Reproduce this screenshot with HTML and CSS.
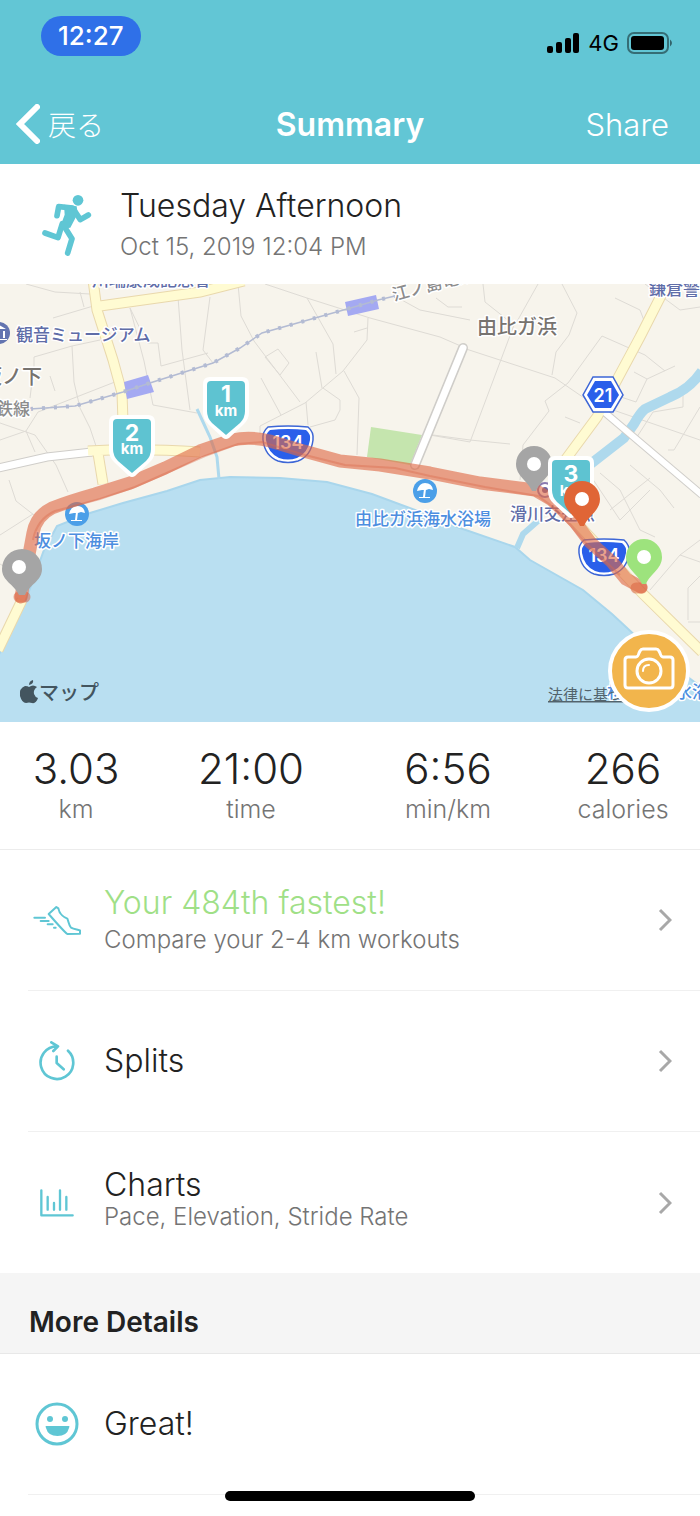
FILE: index.html
```html
<!DOCTYPE html>
<html lang="en">
<head>
<meta charset="utf-8">
<meta name="viewport" content="width=device-width, initial-scale=1">
<title>Summary</title>
<link rel="stylesheet" href="styles.css">
</head>
<body>
<div class="app">
  <header class="top">
    <div class="status">
      <span class="clock">12:27</span>
      <div class="signal">
        <svg width="33" height="20" viewBox="0 0 33 20" aria-hidden="true"><rect x="0" y="13" width="6" height="7" rx="2"/><rect x="9" y="9" width="6" height="11" rx="2"/><rect x="18" y="5" width="6" height="15" rx="2"/><rect x="26" y="0" width="6" height="20" rx="2"/></svg>
        <span>4G</span>
        <svg width="46" height="22" viewBox="0 0 46 22" aria-hidden="true"><rect x="1" y="1" width="40" height="20" rx="6" fill="none" stroke="#000" stroke-opacity=".45" stroke-width="2"/><rect x="4" y="4" width="33" height="14" rx="3"/><path d="M43 7.500q4 3.500 0 7z" fill-opacity=".5"/></svg>
      </div>
    </div>
    <nav class="nav">
      <button class="back" type="button">
        <svg width="24" height="40" viewBox="0 0 24 40" aria-hidden="true"><path d="M21 3 4 20l17 17" fill="none" stroke="#fff" stroke-width="6" stroke-linecap="round"/></svg>
        <span lang="ja">戻る</span>
      </button>
      <h1>Summary</h1>
      <button class="share" type="button">Share</button>
    </nav>
  </header>

  <section class="workout">
    <svg class="runner" width="53" height="65" viewBox="120 580 159 195" aria-hidden="true">
      <g fill="none" stroke="#5fc6d4" stroke-width="17" stroke-linecap="round" stroke-linejoin="round"><path d="M171 648 176 621 218 625 241 660 265 646"/><path d="M190 676 216 717 203 760"/><path d="M187 672 174 714 135 700"/></g>
      <path d="M192 615 230 620 233 642 211 684 178 688 194 645z" fill="#5fc6d4"/><circle cx="234" cy="602" r="16" fill="#5fc6d4"/>
    </svg>
    <div>
      <h2>Tuesday Afternoon</h2>
      <p>Oct 15, 2019 12:04 PM</p>
    </div>
  </section>

  <section class="map" aria-label="Route map">
    <svg class="map-art" viewBox="0 284 700 438">
      <defs>
        <g id="km"><path d="M-16 0H16Q23 0 23 7V35Q23 43 17 48L3 61Q0 63-3 61L-17 48Q-23 43-23 35V7Q-23 0-16 0z" fill="#fff"/><path d="M-15 4H15Q19 4 19 8V34Q19 41 14 46L0 58-14 46Q-19 41-19 34V8Q-19 4-15 4z" fill="#5ec3d1"/></g>
        <g id="pin"><path d="M0-18A18 18 0 0 1 18 0C18 12 6 17 2 27H-2C-6 17-18 12-18 0A18 18 0 0 1 0-18z"/><circle r="7" fill="#fff"/></g>
        <g id="route134"><path d="M-20-17Q0-19 20-17 26-12 25-4 23 12 10 17 0 20-10 17-23 12-25-4-26-12-20-17z" fill="#fff" stroke="#3d66d6" stroke-width="1.500"/><path d="M-18-14Q0-16 18-14 23-10 22-4 20 9 9 14 0 17-9 14-20 9-22-4-23-10-18-14z" fill="#2a5fea"/><text y="5" class="shield">134</text></g>
        <g id="beach"><circle r="12" fill="#4b9fe8"/><path d="M-8 0Q-6-8 0-8 7-8 8-1L4-2 1-1-3-1zM-1-2H1L0 6H-2zM-6 6H5V7H-6z" fill="#fff"/></g>
      </defs>
      <rect y="284" width="700" height="438" fill="#f7f4ec"/>
      <path d="M-5 662 24 605 44 550 57 526 90 513 123 503 167 491 200 480 230 477 280 478 327 482 372 494 415 510 460 528 515 547 530 560 583 590 612 614 640 640 668 662 705 690V730H-5z" fill="#b9dff1" stroke="#a9d6ec" stroke-width="2"/>
      <g fill="none" stroke="#dedbd5" stroke-width="1">
        <path d="M26 284 55 292 90 294M80 292 84 307M53 318 100 304M34 366V357L72 346 100 340M34 366 30 398M72 346 74 382 80 408 90 428 96 446M50 376 55 391M0 440 26 431 38 412 120 380M26 431 35 452M130 308 144 361 153 405 197 413M178 297 182 350 190 410M130 308 147 343H158L161 366 208 353M210 297 203 350 213 363M0 423 35 435 56 465 68 492M9 480 16 501 34 515"/>
        <path d="M238 284 241 316 254 341 300 402M265 284 307 298 370 318 440 337 463 347M307 298 333 344 336 374M368 318 367 340 343 371 305 403 260 426 260 434M316 352 322 388M354 332 367 328M265 357 278 349 289 363 280 375 265 357M261 378 281 415M323 388 340 400 340 410 335 420 310 427M306 402 308 425M344 371 359 398 357 455M433 435 470 440 510 444M400 299 420 310 470 320M436 298 448 307 462 307"/>
        <path d="M483 284 485 302 514 325 470 442 430 435M562 284 577 313 569 335 556 352 552 375M538 284 515 325M460 347 555 378 590 402 700 440M615 298 640 310 645 323M602 336 568 383 545 401 549 411 523 445 520 480M602 336 645 355 665 371M645 284 680 310 700 307M634 372 647 379 636 402 621 397M647 379 675 366M683 395V407L653 412 635 440M700 407 674 450 668 450M600 473 620 490 640 530 655 537M592 478 620 520 650 490M630 465 660 490 674 508M700 540 680 555 650 590M680 555 700 562M700 576 688 588V620M688 622H700M565 417 580 423M0 535 33 514M0 564 10 570M610 510 650 478"/>
      </g>
      <path d="M371 427 422 435 410 465 367 457z" fill="#c5e5ae"/>
      <g fill="none" stroke="#aed9ed"><path d="M702 371Q690 389 670 397L645 409Q640 413 634 424L624 438 588 466" stroke-width="10"/><path d="M539 520 523 534 517 548" stroke-width="6"/><path d="M197 409 210 437 217 457 219 479" stroke-width="3"/></g>
      <g fill="none">
        <g stroke="#e9d8ac" stroke-width="11"><path d="M93 280 97 310 113 360 122 393 124 450M100 306 200 292 244 281M88 451Q140 448 200 452M97 447 103 484M669 280 640 337 597 417 563 463M560 505 642 593 702 652M22 600-2 650"/></g>
        <g stroke="#cfcdc9"><path d="M-2 468 47 457 92 452" stroke-width="9"/><path d="M603 411 702 495" stroke-width="8"/><path d="M463 348 415 465" stroke-width="10" stroke-linecap="round"/></g>
        <g stroke="#fff"><path d="M-2 468 47 457 92 452" stroke-width="7"/><path d="M603 411 702 495" stroke-width="6"/><path d="M463 348 415 465" stroke-width="7" stroke-linecap="round"/></g>
        <g stroke="#fffbd2" stroke-width="9"><path d="M93 280 97 310 113 360 122 393 124 450M100 306 200 292 244 281M88 451Q140 448 200 452M97 447 103 484M669 280 640 337 597 417 563 463M560 505 642 593 702 652M22 600-2 650"/></g>
      </g>
      <path d="M124 382 148 375 154 392 127 399zM345 302 376 295 379 309 348 316z" fill="#a4a9f2"/>
      <g fill="none" stroke="#b3bbd3"><path d="M30 409 75 406 123 392 153 382 213 363 240 348 262 333 347 309 378 300 395 296" stroke-width="1.500"/><path d="M30 409 75 406 123 392 153 382 213 363 240 348 262 333 347 309 378 300 395 296" stroke-width="4" stroke-dasharray="3 9"/></g>

      <g class="halo" lang="ja">
        <g class="place"><text x="92" y="286">川端康成記念會</text><text x="16" y="341">観音ミュージアム</text><text x="649" y="295">鎌倉警察署</text><text x="510" y="520">滑川交差点</text></g>
        <g class="blue"><text x="355" y="525">由比ガ浜海水浴場</text><text x="34" y="547">坂ノ下海岸</text><text x="607" y="698">材木座海水浴場</text></g>
        <g class="town"><text x="477" y="334">由比ガ浜</text><text x="-18" y="384">坂ノ下</text></g>
        <g class="line"><text x="-4" y="415">鉄線</text><text x="394" y="301" transform="rotate(-15 394 301)">江ノ島電鉄</text></g>
      </g>
      <circle cx="-1" cy="333" r="11" fill="#6374b0"/><path d="M-7 329-1 325 6 329zM-6 331H-4V338H-6zM-2 331H0V338H-2zM3 331H5V338H3zM-7 339H7V340H-7z" fill="#fff"/>
      <use href="#beach" x="425" y="491"/><use href="#beach" x="77" y="514"/>
      <use href="#route134" x="288" y="444"/><use href="#route134" x="604" y="557"/>
      <path d="M593 377H613L623 395 613 412H593L583 395z" fill="#fff" stroke="#3d66d6" stroke-width="1.500"/><path d="M595 381H611L619 395 611 408H595L587 395z" fill="#2a5fea"/><text x="603" y="402" class="shield">21</text>
      <circle cx="545" cy="490" r="7" fill="#fff" stroke="#8a7ab0" stroke-width="2"/><circle cx="545" cy="490" r="3" fill="#6b62a0"/>

      <path d="M21 597 27 565 33 533Q36 516 52 508 70 501 95 494L130 483 165 468 200 451 232 440Q250 436 270 441L300 450 340 461 380 465 430 473 480 483 535 490 552 500 575 522 590 542 612 562 626 579 641 587" fill="none" stroke="#de6946" stroke-opacity=".62" stroke-width="13" stroke-linejoin="round" stroke-linecap="round"/>
      <path d="M33 540Q37 519 55 511L100 499 135 487 205 456 238 444 262 442 305 455 345 465 395 468 430 476 485 487 538 496 556 509 585 542 620 575" fill="none" stroke="#d9694a" stroke-opacity=".4" stroke-width="2"/>
      <path d="M19 597H25M636 588H642" stroke="#d95e3c" stroke-opacity=".5" stroke-width="11" stroke-linecap="round"/>

      <g class="km"><use href="#km" x="226" y="377"/><text x="226" y="402" class="num">1</text><text x="226" y="416">km</text>
      <use href="#km" x="132" y="415"/><text x="132" y="441" class="num">2</text><text x="132" y="454">km</text></g>
      <use href="#pin" x="534" y="464" fill="#a5a5a5"/>
      <g class="km"><use href="#km" x="571" y="456"/><text x="571" y="482" class="num">3</text><text x="571" y="496">km</text></g>
      <use href="#pin" x="582" y="499" fill="#e06536"/>
      <use href="#pin" x="644" y="557" fill="#9de37d"/>
      <path d="M22 549A20 20 0 0 1 42 569C42 581 30 584 25 595H19C14 584 2 581 2 569A20 20 0 0 1 22 549z" fill="#a5a5a5"/><circle cx="19" cy="567" r="7" fill="#fff"/>

      <path d="M37 687Q33 690 34 694 35 697 38 698 36 704 32 703 29 702 26 703 22 703 20 696 19 688 25 686 28 686 29 687 33 684 37 687zM29 685Q29 681 33 680 34 684 29 685z" fill="#43555f"/>
      <text x="39" y="700" class="brand" lang="ja">マップ</text>
      <a href="#legal"><text x="548" y="700" class="legal" lang="ja">法律に基づく情報</text></a>
    </svg>
    <button class="camera" type="button" aria-label="Add photo">
      <svg width="52" height="44" viewBox="0 0 52 44" fill="none" stroke="#fff" stroke-width="3" stroke-linejoin="round" aria-hidden="true"><path d="M5 10H13Q15 10 16 6L17 4Q18 2 20 2H33Q35 2 36 4L37 6Q38 10 40 10H47Q50 10 50 13V38Q50 41 47 41H5Q2 41 2 38V13Q2 10 5 10z"/><circle cx="26" cy="24" r="12"/><path d="M20 24Q20 18 26 18" stroke-width="2" stroke-linecap="round"/></svg>
    </button>
  </section>

  <dl class="stats">
    <div><dd>3.03</dd><dt>km</dt></div>
    <div><dd>21:00</dd><dt>time</dt></div>
    <div><dd>6:56</dd><dt>min/km</dt></div>
    <div><dd>266</dd><dt>calories</dt></div>
  </dl>

  <main>
    <a class="row" href="#compare">
      <span class="icon"><svg width="49" height="33" viewBox="95 522 147 99" fill="none" stroke="#5fc6d4" stroke-width="6" stroke-linecap="round" stroke-linejoin="round" aria-hidden="true"><path d="M142 552 165 531 171 535C174 553 190 563 198 566 202 576 203 587 209 593 218 598 226 598 236 601V611L198 612Q190 607 142 552z"/><path d="M99 563H131M118 573H142M139 583H154M158 593H163"/></svg></span>
      <span class="text"><span class="title best">Your 484th fastest!</span><span class="sub">Compare your 2-4 km workouts</span></span>
      <svg class="chevron" width="14" height="24" viewBox="0 0 14 24" aria-hidden="true"><path d="M2 2 12 12 2 22"/></svg>
    </a>
    <a class="row" href="#splits">
      <span class="icon"><svg width="38" height="40" viewBox="113 68 114 120" fill="none" stroke="#5fc6d4" stroke-width="8" stroke-linecap="round" stroke-linejoin="round" aria-hidden="true"><path d="M203 97A49 49 0 1 1 170 84M153 72 173 84 159 98M169 115V134L190 153"/></svg></span>
      <span class="text"><span class="title">Splits</span></span>
      <svg class="chevron" width="14" height="24" viewBox="0 0 14 24" aria-hidden="true"><path d="M2 2 12 12 2 22"/></svg>
    </a>
    <a class="row tight" href="#charts">
      <span class="icon"><svg width="34" height="28" viewBox="124 511 102 84" fill="none" stroke="#5fc6d4" stroke-width="7" stroke-linecap="round" stroke-linejoin="round" aria-hidden="true"><path d="M128 515V590H222M147 535V573M166 553V573M184 515V573M203 535V573"/></svg></span>
      <span class="text"><span class="title">Charts</span><span class="sub">Pace, Elevation, Stride Rate</span></span>
      <svg class="chevron" width="14" height="24" viewBox="0 0 14 24" aria-hidden="true"><path d="M2 2 12 12 2 22"/></svg>
    </a>
    <h3 class="section">More Details</h3>
    <div class="row">
      <span class="icon"><svg width="44" height="44" viewBox="0 0 44 44" fill="#5fc6d4" aria-hidden="true"><circle cx="22" cy="22" r="20" fill="none" stroke="#5fc6d4" stroke-width="3"/><circle cx="15" cy="17" r="3"/><circle cx="30" cy="17" r="3"/><path d="M11 24H34Q35 24 34 26 32 34 22.500 34 13 34 11 26 10 24 11 24z"/></svg></span>
      <span class="text"><span class="title">Great!</span></span>
    </div>
  </main>
  <div class="home"></div>
</div>
</body>
</html>
```
FILE: styles.css
```css
* { box-sizing: border-box; }
body, h1, h2, h3, p, dl, dd { margin: 0; }
body {
  background: #fff;
  color: #222;
  font-family: Inter, "Noto Sans CJK JP", sans-serif;
  font-weight: 300;
}
button { border: 0; padding: 0; background: none; font: inherit; color: inherit; cursor: pointer; }
a { color: inherit; text-decoration: none; }
svg { flex: none; display: block; }
.app { position: relative; min-height: 100vh; padding-bottom: 20px; }

.top { background: #62c6d5; color: #fff; }
.status { display: flex; justify-content: space-between; align-items: flex-start; padding: 16px 27px 0 41px; height: 84px; }
.clock { padding: 0 17px; border-radius: 20px; background: #2f70e8; font-size: 26px; font-weight: 500; line-height: 40px; }
.signal { display: flex; align-items: center; gap: 8px; padding-top: 16px; color: #000; font-size: 22px; font-weight: 400; line-height: 22px; }
.nav { display: grid; grid-template-columns: 1fr auto 1fr; align-items: center; height: 80px; padding: 0 16px; font-size: 31px; }
.back { display: flex; align-items: center; gap: 8px; font-size: 28px; }
.nav h1 { font-size: 32px; font-weight: 600; }
.share { justify-self: end; padding-right: 15px; }

.workout { display: flex; align-items: center; gap: 27px; height: 120px; padding: 2px 0 0 40px; }
.workout h2 { font-size: 32px; font-weight: 300; line-height: 44px; }
.workout p { color: #747474; font-size: 24px; line-height: 38px; }

.map { position: relative; }
.map-art { width: 100%; height: auto; }
.map-art text { font-family: Inter, "Noto Sans CJK JP", sans-serif; }
.halo text { paint-order: stroke; stroke: #fff; stroke-width: 3px; stroke-linejoin: round; font-weight: 500; }
.place { fill: #5f6da8; font-size: 17px; }
.blue { fill: #4d8ee0; font-size: 17px; }
.town { fill: #77736f; font-size: 20px; }
.line { fill: #8c8c8c; font-size: 17px; }
.map-art .shield { fill: #fff; font-size: 18px; font-weight: 600; text-anchor: middle; }
.km text { fill: #fff; font-size: 15px; font-weight: 700; text-anchor: middle; }
.km .num { font-size: 23px; }
.brand { fill: #43555f; font-size: 20px; font-weight: 500; }
.legal { fill: #52636c; font-size: 15px; font-weight: 400; text-decoration: underline; }
.camera {
  position: absolute; right: 10px; bottom: 10px;
  display: grid; place-items: center;
  width: 82px; height: 82px;
  border: 4px solid #fff; border-radius: 50%;
  background: #f2b54c;
}
.camera svg { margin-bottom: 4px; }

.stats { display: grid; grid-template-columns: 152fr 198fr 196fr 154fr; padding: 23px 0 24px; border-bottom: 1px solid #ececec; text-align: center; }
.stats div { display: flex; flex-direction: column; }
.stats dd { font-size: 42px; line-height: 48px; }
.stats dt { color: #747474; font-size: 25px; line-height: 32px; }

.row { display: flex; align-items: center; gap: 18px; height: 141px; margin-left: 28px; padding-right: 28px; border-bottom: 1px solid #f0f0f0; }
.icon { display: grid; place-items: center; width: 58px; }
.text { flex: 1; display: flex; flex-direction: column; }
.title { font-size: 32px; line-height: 40px; }
.sub { color: #747474; font-size: 24px; line-height: 34px; }
.tight { border-bottom: 0; }
.tight .text { padding-bottom: 8px; }
.tight .title { line-height: 36px; }
.tight .sub { line-height: 28px; }
.best { color: #9fe087; }
.chevron { fill: none; stroke: #a8a8a8; stroke-width: 3; }
.section { padding: 29px 29px 11px; border-bottom: 1px solid #e8e8e8; background: #f5f5f5; font-size: 28px; font-weight: 600; line-height: 40px; }

.home { position: absolute; left: 50%; bottom: 15px; width: 250px; height: 10px; margin-left: -125px; border-radius: 5px; background: #000; }
```
